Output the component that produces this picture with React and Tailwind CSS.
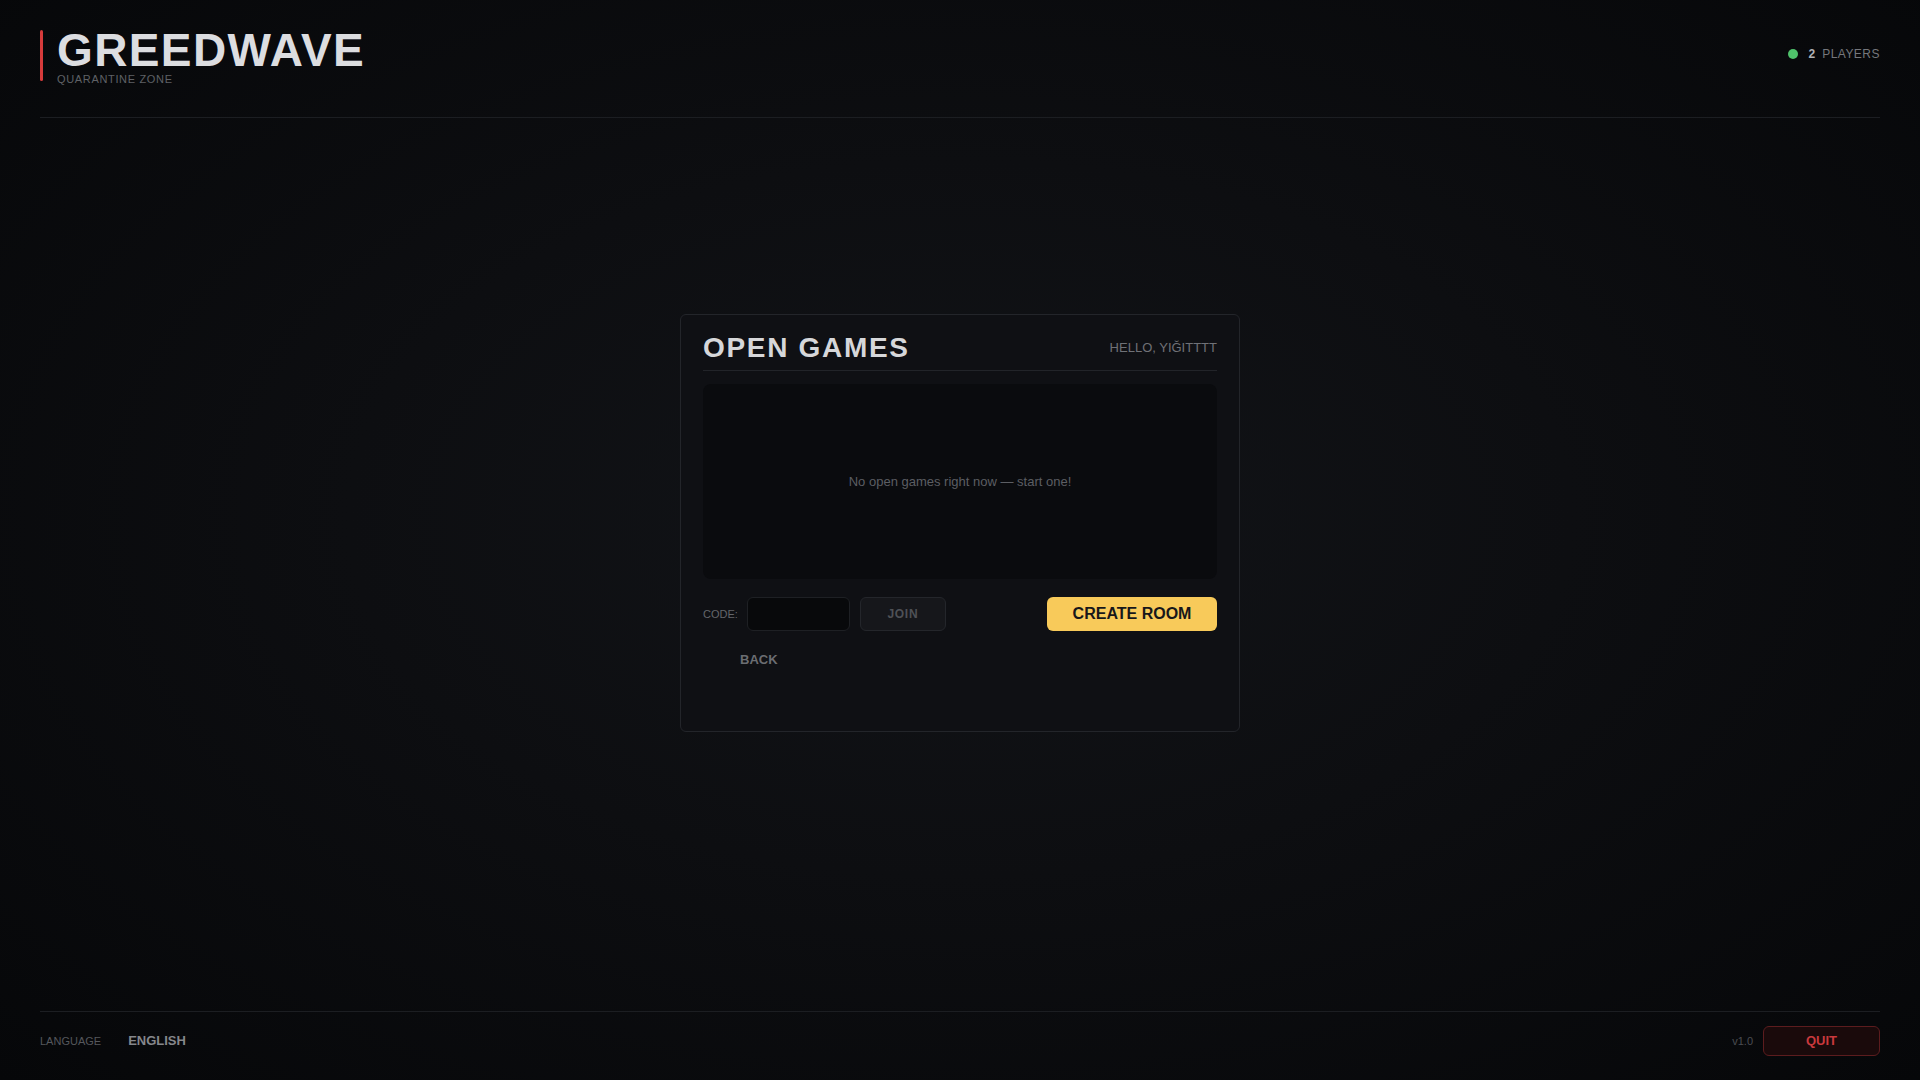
import { useState } from 'react';

export default function App() {
  const [code, setCode] = useState('');

  return (
    <div className="flex h-screen w-full flex-col bg-[radial-gradient(ellipse_at_50%_48%,#121418_0%,#0d0e11_45%,#060709_100%)] font-['Liberation_Sans',Arial,sans-serif]">
      {/* top bar */}
      <header className="mx-10 flex h-[118px] shrink-0 items-start justify-between border-b border-[#1c1e22] pt-[30px]">
        <div className="flex items-start">
          <div className="h-[51px] w-[3px] rounded-full bg-[#d63b3b]" />
          <div className="ml-[14px] -mt-[3px]">
            <h1 className="text-[46px] font-bold leading-none tracking-[0.03em] text-[#dcdde0]">GREEDWAVE</h1>
            <p className="text-[11px] leading-[13px] tracking-[0.06em] text-[#5f6166]">QUARANTINE ZONE</p>
          </div>
        </div>
        <div className="mt-[16px] flex items-center text-[12px] leading-4">
          <span className="mr-[10px] h-[10px] w-[10px] rounded-full bg-[#4fc26b]" />
          <span className="mr-[7px] font-bold text-[#b0b2b6]">2</span>
          <span className="tracking-[0.04em] text-[#75777c]">PLAYERS</span>
        </div>
      </header>

      {/* lobby */}
      <main className="flex flex-1 justify-center pt-[196px]">
        <div className="flex h-[418px] w-[560px] flex-col rounded-md border border-[#23252a] bg-[#0f1014] px-[22px] pt-[19px]">
          <div className="flex items-center justify-between border-b border-[#222429] pb-[8px]">
            <h2 className="text-[28px] font-bold leading-none tracking-[0.06em] text-[#d6d7da]">OPEN GAMES</h2>
            <span className="text-[13px] text-[#6f7177]">HELLO, YIĞITTTT</span>
          </div>

          <div className="mt-[13px] flex h-[195px] items-center justify-center rounded-lg bg-[#0a0b0e]">
            <p className="text-[13px] text-[#5c5e63]">No open games right now — start one!</p>
          </div>

          <div className="mt-[18px] flex items-center">
            <label className="text-[11px] text-[#64666b]">CODE:</label>
            <input
              type="text"
              value={code}
              onChange={(e) => setCode(e.target.value)}
              className="ml-[9px] h-[34px] w-[103px] rounded-md border border-[#1e2024] bg-[#08090b] px-2 text-[13px] text-[#cfd0d3] outline-none"
            />
            <button className="ml-[10px] h-[34px] w-[86px] rounded-md border border-[#24262b] bg-[#16171b] text-[12px] font-bold tracking-[0.06em] text-[#4f5156]">
              JOIN
            </button>
            <button className="ml-auto h-[34px] w-[170px] rounded-md bg-[#f8ca5a] text-[16px] font-bold text-[#17171a]">
              CREATE ROOM
            </button>
          </div>

          <div className="mt-[16px]">
            <button className="pl-[37px] text-[13px] font-bold leading-4 text-[#6b6d72]">BACK</button>
          </div>
        </div>
      </main>

      {/* footer */}
      <footer className="mx-10 flex h-[69px] shrink-0 items-start justify-between border-t border-[#1c1e22] pt-[14px]">
        <div className="flex h-[30px] items-center">
          <span className="text-[11px] text-[#55575c]">LANGUAGE</span>
          <span className="ml-[27px] text-[13px] font-bold text-[#85878b]">ENGLISH</span>
        </div>
        <div className="flex items-center">
          <span className="text-[11px] text-[#4b4d52]">v1.0</span>
          <button className="ml-[10px] h-[30px] w-[117px] rounded-md border border-[#5c1c1e] bg-[#1a0a0b] text-[13px] font-bold text-[#c9393d]">
            QUIT
          </button>
        </div>
      </footer>
    </div>
  );
}
